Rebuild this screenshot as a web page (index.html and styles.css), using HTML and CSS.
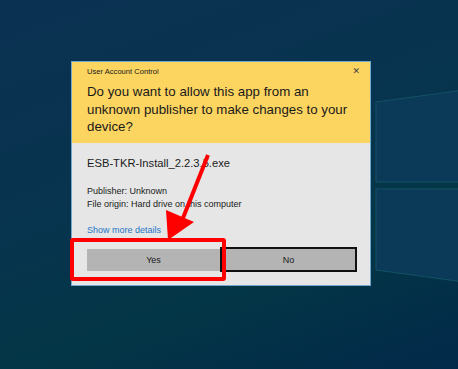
FILE: index.html
```html
<!DOCTYPE html>
<html lang="en">
    <head>
        <meta charset="UTF-8" />
        <title>User Account Control</title>
        <link rel="stylesheet" href="styles.css">
    </head>
    <body>
        <svg class="win-logo" width="90" height="230" viewBox="0 0 90 230">
            <polygon points="2,42 90,30 90,122 2,122" fill="#0a3a57" stroke="#155266" stroke-width="1" />
            <polygon points="2,129 90,129 90,222 2,210" fill="#0a3a57" stroke="#155266" stroke-width="1" />
        </svg>

        <div class="dialog">
            <div class="head">
                <div class="title-row">
                    <span class="title">User Account Control</span>
                    <span class="close">&#x2715;</span>
                </div>
                <h1>Do you want to allow this app from an unknown publisher to make changes to your device?</h1>
            </div>
            <div class="body">
                <div class="file">ESB-TKR-Install_2.2.3.5.exe</div>
                <div class="meta">
                    <div>Publisher: Unknown</div>
                    <div>File origin: Hard drive on this computer</div>
                </div>
                <a class="details" href="#">Show more details</a>
                <div class="buttons">
                    <button class="btn">Yes</button>
                    <button class="btn btn-no">No</button>
                </div>
            </div>
        </div>

        <div class="highlight"></div>
        <svg class="arrow" width="458" height="369" viewBox="0 0 458 369">
            <line x1="208" y1="155" x2="183" y2="218" stroke="#ff0000" stroke-width="4" />
            <polygon points="166,210 194,222 168,240" fill="#ff0000" />
        </svg>
    </body>
</html>
```

FILE: styles.css
```css
* {
  box-sizing: border-box;
}
body {
  margin: 0;
  width: 458px;
  height: 369px;
  overflow: hidden;
  position: relative;
  font-family: 'Liberation Sans', Arial, sans-serif;
  background: linear-gradient(160deg, #0b3152 0%, #07344e 45%, #033646 70%, #02294a 100%);
  padding: 61px 0 0 71px;
}
.win-logo {
  position: absolute;
  left: 374px;
  top: 60px;
}
.dialog {
  width: 300px;
  height: 225px;
  border: 1px solid #6fa7cf;
  display: flex;
  flex-direction: column;
  position: relative;
}
.head {
  background: #fcd460;
  height: 81px;
  padding: 3px 10px 0 15px;
  color: #1a1a1a;
}
.title-row {
  display: flex;
  justify-content: space-between;
  align-items: center;
  height: 13px;
  line-height: 13px;
}
.title {
  font-size: 7.6px;
}
.close {
  font-family: 'DejaVu Sans', sans-serif;
  font-size: 9px;
  color: #444;
}
h1 {
  margin: 5px 0 0;
  font-weight: normal;
  font-size: 13.3px;
  line-height: 17.5px;
}
.body {
  flex: 1;
  background: #e6e6e6;
  padding: 12px 13px 0 15px;
  color: #1a1a1a;
}
.file {
  font-size: 11.2px;
  line-height: 17px;
}
.meta {
  margin-top: 13px;
  font-size: 9px;
  line-height: 12.5px;
}
.details {
  display: block;
  margin-top: 14px;
  font-size: 9px;
  line-height: 12px;
  color: #2576c7;
  text-decoration: none;
}
.buttons {
  display: flex;
  align-items: center;
  margin-top: 11px;
}
.btn {
  width: 133px;
  height: 22px;
  border: none;
  background: #b4b4b4;
  font-family: 'Liberation Sans', Arial, sans-serif;
  font-size: 9px;
  color: #1a1a1a;
  padding: 0;
}
.btn-no {
  width: 137px;
  height: 25px;
  border: 2px solid #111;
}
.highlight {
  position: absolute;
  left: 70px;
  top: 238px;
  width: 156px;
  height: 43px;
  border: 4px solid #ff0000;
  border-radius: 3px;
}
.arrow {
  position: absolute;
  left: 0;
  top: 0;
}
```
